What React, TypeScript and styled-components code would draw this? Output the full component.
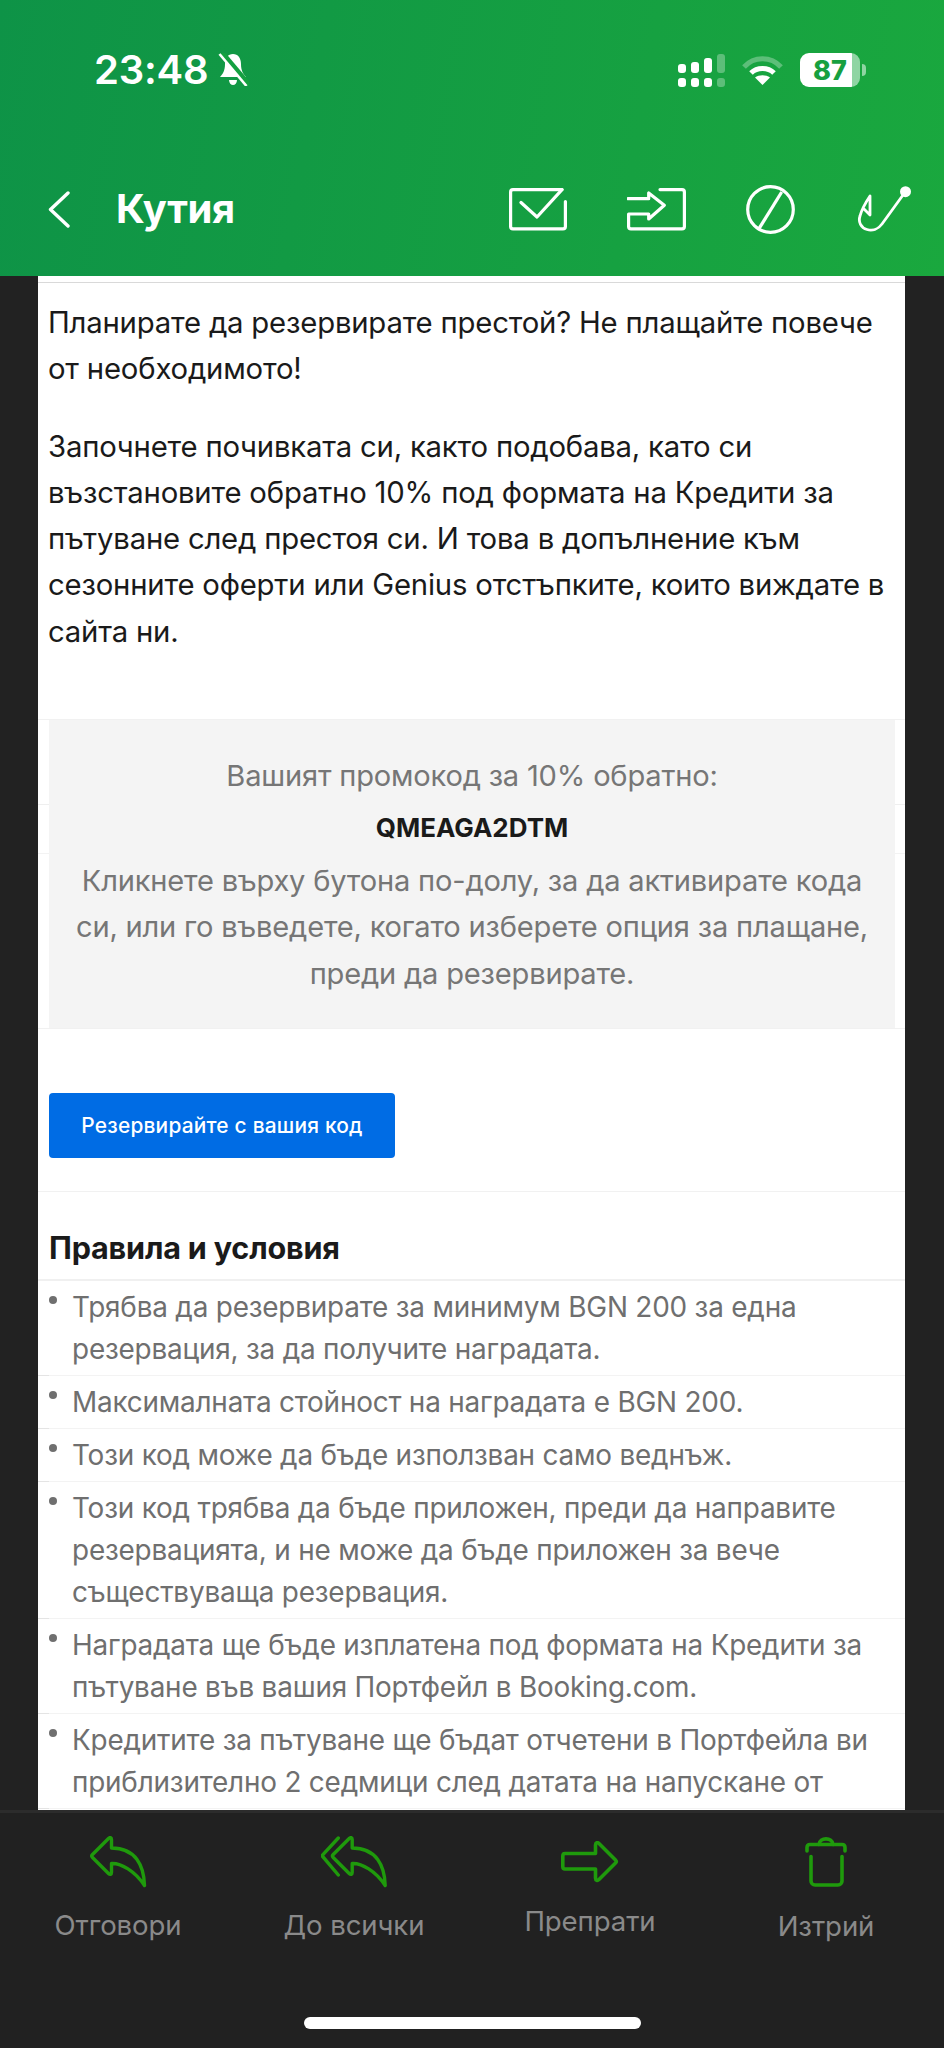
import React from "react";
import styled, { createGlobalStyle } from "styled-components";

const Global = createGlobalStyle`
  html, body { margin: 0; padding: 0; background: #222; }
  * { box-sizing: border-box; }
`;
const Page = styled.div`
  width: 944px; height: 2048px; display: flex; flex-direction: column; overflow: hidden;
  font-family: Inter, "Noto Sans", sans-serif; background: #222222;
`;
const Header = styled.header`
  height: 276px; flex: none; display: flex; flex-direction: column; color: #fff;
  background: linear-gradient(100deg, #0e9347 0%, #1aa83e 100%);
`;
const StatusBar = styled.div`
  height: 140px; padding: 48px 0 0 94px; display: flex; align-items: flex-start;
`;
const Time = styled.span`
  font-size: 40px; font-weight: 600; line-height: 44px; letter-spacing: -0.2px;
`;
const StatusIcons = styled.div`
  margin-left: auto; margin-right: 84px; display: flex; align-items: center; gap: 17px; height: 44px;
`;
const Battery = styled.div`
  width: 60px; height: 34px; border-radius: 9px; display: flex; align-items: center; justify-content: center;
  background: linear-gradient(90deg, #fff 0 87%, #8fd5a3 87% 100%);
  color: #17a03f; font-size: 27px; font-weight: 800; position: relative;
  &::after { content: ""; position: absolute; right: -6px; top: 11px; width: 4px; height: 12px; border-radius: 0 4px 4px 0; background: #8fd5a3; }
`;
const Nav = styled.nav`
  display: flex; align-items: center; height: 50px; margin-top: 44px; padding: 0 32px 0 48px;
`;
const Title = styled.h1`
  margin: 0 0 0 46px; font-size: 40px; font-weight: 700; line-height: 50px; letter-spacing: -0.4px;
`;
const NavActions = styled.div`
  margin-left: auto; display: flex; align-items: center; gap: 60px;
`;
const Middle = styled.main`
  flex: 1; min-height: 0; overflow: hidden; padding: 0 39px 0 38px;
`;
const Mail = styled.div`
  background: #fff; height: 100%; overflow: hidden; padding-top: 6px;
`;
const Intro = styled.div`
  border-top: 1px solid #d9d9d9; padding: 17px 11px 0 10px; height: 437px;
  font-size: 29.3px; line-height: 46.3px; color: #1a1a1a; letter-spacing: -0.2px;
`;
const Para = styled.p`
  margin: 0 0 31px;
`;
const PromoRow = styled.div`
  border-top: 1px solid #f1f1f1; border-bottom: 1px solid #f1f1f1; padding: 0 10px 0 11px;
  background:
    linear-gradient(#efefef, #efefef) 0 84px / 100% 1px no-repeat,
    linear-gradient(#f3f3f3, #f3f3f3) 0 133px / 100% 1px no-repeat;
`;
const PromoBox = styled.div`
  background: #f4f4f4; height: 308px; padding: 33px 24px 0; text-align: center; color: #767676;
  font-size: 29.1px; line-height: 46.5px; letter-spacing: -0.2px;
`;
const Code = styled.div`
  color: #1a1a1a; font-weight: 700; font-size: 26px; line-height: 40px; margin: 8px 0 10px; letter-spacing: 0;
`;
const ButtonRow = styled.div`
  padding: 64px 0 33px 11px; border-bottom: 1px solid #f1f1f1;
`;
const BookButton = styled.button`
  display: block; width: 346px; height: 65px; border: 0; border-radius: 4px; background: #006ce4; color: #fff;
  font-family: inherit; font-size: 20.9px; font-weight: 500; letter-spacing: 0.2px; padding: 0;
`;
const TermsTitle = styled.h2`
  margin: 0; height: 89px; padding: 38px 0 0 11px; font-size: 30.6px; line-height: 36px; font-weight: 700; color: #1a1a1a;
  border-bottom: 2px solid #f0f0f0; letter-spacing: -0.2px;
`;
const Terms = styled.ul`
  margin: 0; padding: 0; list-style: none;
`;
const Term = styled.li`
  position: relative; padding: 5px 20px 5px 34px; border-bottom: 1px solid #f3f3f3;
  font-size: 27.9px; line-height: 42px; color: #6f6f6f; letter-spacing: -0.2px;
  &::before { content: ""; position: absolute; left: 11px; top: 15px; width: 8px; height: 8px; border-radius: 50%; background: #6f6f6f; }
  &::after { content: ""; position: absolute; left: 0; bottom: -1px; width: 11px; height: 1px; background: #e4e4e4; }
`;
const Bottom = styled.footer`
  height: 238px; flex: none; background: #212121; border-top: 3px solid #2c2c2c; position: relative;
`;
const Actions = styled.div`
  display: grid; grid-template-columns: repeat(4, 236px);
`;
const Action = styled.div<{ $top: number; $gap: number }>`
  display: flex; flex-direction: column; align-items: center; padding-top: ${p => p.$top}px; gap: ${p => p.$gap}px;
`;
const ActionLabel = styled.span`
  font-size: 27.6px; line-height: 36px; color: #8a8a8a; letter-spacing: -0.1px;
`;
const Home = styled.div`
  position: absolute; left: 304px; top: 204px; width: 337px; height: 12px; border-radius: 6px; background: #fff;
`;
const Icon = styled.svg`
  display: block; flex: none;
`;
const BellIcon = styled(Icon)`
  margin: 5px 0 0 10px;
`;

const G = "#1f9a0c";

const Signal = () => (
  <Icon width="47" height="33" viewBox="0 0 47 33" fill="#fff">
    <rect x="0" y="10" width="8" height="9" rx="3" /><rect x="0" y="24" width="8" height="9" rx="3" />
    <rect x="13" y="8" width="8" height="11" rx="3" /><rect x="13" y="24" width="8" height="9" rx="3" />
    <rect x="26" y="4" width="8" height="15" rx="3" /><rect x="26" y="24" width="8" height="9" rx="3" />
    <rect x="39" y="0" width="8" height="19" rx="3" opacity=".3" /><rect x="39" y="24" width="8" height="9" rx="3" opacity=".3" />
  </Icon>
);
const Wifi = () => (
  <Icon width="41" height="29" viewBox="0 0 41 29" fill="none" stroke="#fff" strokeWidth="5">
    <path d="M2 11C12 0 29 0 39 11" opacity=".3" />
    <path d="M9 17C15 11 26 11 32 17" />
    <path d="M20.5 29L13 21.5C17 18.5 24 18.5 28 21.5Z" fill="#fff" stroke="none" />
  </Icon>
);
const Bell = () => (
  <BellIcon width="31" height="33" viewBox="0 0 31 33">
    <path d="M15 1c-5 0-8 4-8 10 0 6-2 10-5 13h26c-3-3-5-7-5-13 0-6-3-10-8-10z" fill="#fff" />
    <path d="M11 27h8c0 3-2 5-4 5s-4-2-4-5z" fill="#fff" />
    <path d="M4 0L31 32" stroke="#14a040" strokeWidth="5.5" />
    <path d="M1.5 1L28.5 33" stroke="#fff" strokeWidth="2.6" />
  </BellIcon>
);
const Chevron = () => (
  <Icon width="22" height="37" viewBox="0 0 22 37" fill="none" stroke="#fff" strokeWidth="3.4" strokeLinecap="round" strokeLinejoin="round">
    <path d="M20 2L2.5 18.5L20 35" />
  </Icon>
);
const CheckBox = () => (
  <Icon width="58" height="43" viewBox="0 0 58 43" fill="none" stroke="#fff" strokeWidth="3.2" strokeLinejoin="round" strokeLinecap="round">
    <path d="M53 1.6H4a2.4 2.4 0 0 0-2.4 2.4V38.5a2.4 2.4 0 0 0 2.4 2.4H54a2.4 2.4 0 0 0 2.4-2.4V13.5" />
    <path d="M12 14.5L28 29L53 1.6" />
  </Icon>
);
const MoveBox = () => (
  <Icon width="59" height="43" viewBox="0 0 59 43" fill="none" stroke="#fff" strokeWidth="3.2" strokeLinejoin="round" strokeLinecap="round">
    <path d="M33 1.6H55a2.4 2.4 0 0 1 2.4 2.4V38.5a2.4 2.4 0 0 1-2.4 2.4H4a2.4 2.4 0 0 1-2.4-2.4V26H21.7V31L37.3 17.3L21.7 5V10.7H1" />
  </Icon>
);
const Block = () => (
  <Icon width="49" height="49" viewBox="0 0 49 49" fill="none" stroke="#fff" strokeWidth="3.2">
    <circle cx="24.5" cy="24.5" r="22.8" />
    <path d="M35.7 7L13 43.7" />
  </Icon>
);
const Hook = () => (
  <Icon width="57" height="46" viewBox="-3 0 57 46" fill="none" stroke="#fff" strokeWidth="2.8" strokeLinejoin="round" strokeLinecap="round">
    <circle cx="47.5" cy="5.7" r="5.5" fill="#fff" stroke="none" />
    <path d="M45 9L24 38C20 43.5 14 45 9 43.5C3 42 0 36 2 30C3 26 8 16 12 10V29L6 23" />
  </Icon>
);
const replyPath = "M21.5 12V3.5C21.5 1.5 20 1 18.5 2.5L2.5 18.5C1.5 19.5 1.5 20.5 2.5 21.5L18.5 37.5C20 39 21.5 38.5 21.5 36.5V27.5C31 27 45 35 54.5 49.5C54 30 46 12 21.5 12Z";
const Reply = () => (
  <Icon width="57" height="52" viewBox="0 0 57 52" fill="none" stroke={G} strokeWidth="3.4" strokeLinejoin="round">
    <path d={replyPath} />
  </Icon>
);
const ReplyAll = () => (
  <Icon width="66" height="52" viewBox="0 0 66 52" fill="none" stroke={G} strokeWidth="3.4" strokeLinejoin="round" strokeLinecap="round">
    <path d={replyPath} transform="translate(9.7 0)" />
    <path d="M17.3 2L1 19.7L17.3 39" />
  </Icon>
);
const Forward = () => (
  <Icon width="58" height="42" viewBox="0 0 58 42" fill="none" stroke={G} strokeWidth="3.6" strokeLinejoin="round">
    <path d="M4 12.5H34.5V4C34.5 1.5 36.5 1 38 2.5L54.5 19C55.5 20 55.5 21 54.5 22L38 38.5C36.5 40 34.5 39.5 34.5 37V28H4C2.5 28 1.8 27 1.8 25.5V15C1.8 13.5 2.5 12.5 4 12.5Z" />
  </Icon>
);
const Trash = () => (
  <Icon width="42" height="50" viewBox="0 0 42 50" fill="none" stroke={G} strokeWidth="3.6" strokeLinejoin="round" strokeLinecap="round">
    <path d="M2 14V10.5C2 8.5 3 7.5 5 7.5H37C39 7.5 40 8.5 40 10.5V14" />
    <path d="M14 7.5C14.5 0 27.5 0 28 7.5" />
    <path d="M6 19.5V44a4 4 0 0 0 4 4H33a4 4 0 0 0 4-4V19.5" />
  </Icon>
);

const terms = [
  "Трябва да резервирате за минимум BGN 200 за една резервация, за да получите наградата.",
  "Максималната стойност на наградата е BGN 200.",
  "Този код може да бъде използван само веднъж.",
  "Този код трябва да бъде приложен, преди да направите резервацията, и не може да бъде приложен за вече съществуваща резервация.",
  "Наградата ще бъде изплатена под формата на Кредити за пътуване във вашия Портфейл в Booking.com.",
  "Кредитите за пътуване ще бъдат отчетени в Портфейла ви приблизително 2 седмици след датата на напускане от",
];

export default function App() {
  return (
    <Page>
      <Global />
      <Header>
        <StatusBar>
          <Time>23:48</Time>
          <Bell />
          <StatusIcons>
            <Signal />
            <Wifi />
            <Battery>87</Battery>
          </StatusIcons>
        </StatusBar>
        <Nav>
          <Chevron />
          <Title>Кутия</Title>
          <NavActions>
            <CheckBox />
            <MoveBox />
            <Block />
            <Hook />
          </NavActions>
        </Nav>
      </Header>
      <Middle>
        <Mail>
          <Intro>
            <Para>Планирате да резервирате престой? Не плащайте повече от необходимото!</Para>
            <Para>Започнете почивката си, както подобава, като си възстановите обратно 10% под формата на Кредити за пътуване след престоя си. И това в допълнение към сезонните оферти или Genius отстъпките, които виждате в сайта ни.</Para>
          </Intro>
          <PromoRow>
            <PromoBox>
              Вашият промокод за 10% обратно:
              <Code>QMEAGA2DTM</Code>
              Кликнете върху бутона по-долу, за да активирате кода си, или го въведете, когато изберете опция за плащане, преди да резервирате.
            </PromoBox>
          </PromoRow>
          <ButtonRow>
            <BookButton>Резервирайте с вашия код</BookButton>
          </ButtonRow>
          <TermsTitle>Правила и условия</TermsTitle>
          <Terms>
            {terms.map(t => <Term key={t}>{t}</Term>)}
          </Terms>
        </Mail>
      </Middle>
      <Bottom>
        <Actions>
          <Action $top={23} $gap={19}><Reply /><ActionLabel>Отговори</ActionLabel></Action>
          <Action $top={23} $gap={19}><ReplyAll /><ActionLabel>До всички</ActionLabel></Action>
          <Action $top={28} $gap={20}><Forward /><ActionLabel>Препрати</ActionLabel></Action>
          <Action $top={24} $gap={21}><Trash /><ActionLabel>Изтрий</ActionLabel></Action>
        </Actions>
        <Home />
      </Bottom>
    </Page>
  );
}
